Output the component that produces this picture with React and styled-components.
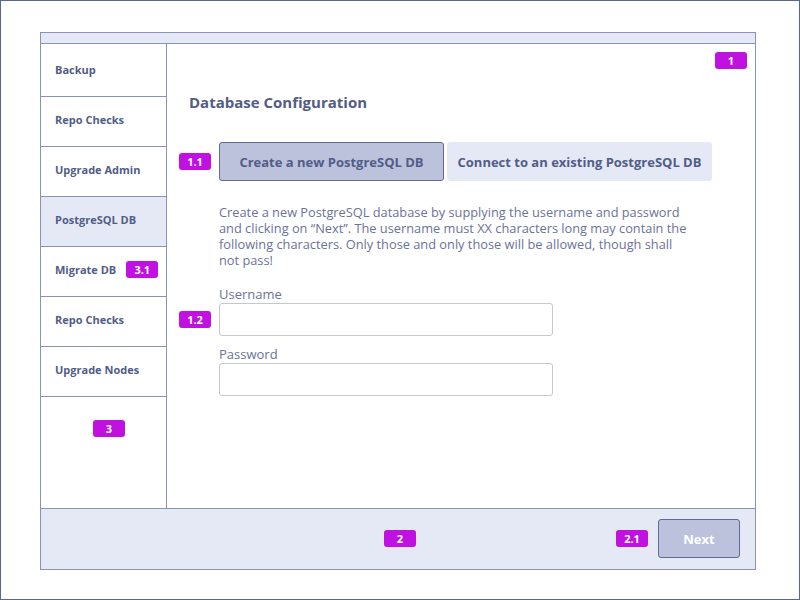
import React from "react";
import styled, { createGlobalStyle } from "styled-components";

const GlobalStyle = createGlobalStyle`
  * { box-sizing: border-box; }
  body {
    margin: 0;
    font-family: "Open Sans", "Noto Sans", sans-serif;
    background: #ffffff;
  }
`;

const navItems = [
  { label: "Backup" },
  { label: "Repo Checks" },
  { label: "Upgrade Admin" },
  { label: "PostgreSQL DB", active: true },
  { label: "Migrate DB", badge: "3.1" },
  { label: "Repo Checks" },
  { label: "Upgrade Nodes" },
];

export default function App() {
  return (
    <>
      <GlobalStyle />
      <Page>
        <Window>
          <TopBar />
          <Body>
            <Sidebar>
              {navItems.map((item, i) => (
                <NavItem key={i} $active={item.active}>
                  {item.label}
                  {item.badge && <Badge>{item.badge}</Badge>}
                </NavItem>
              ))}
              <SidebarBadge>
                <Badge>3</Badge>
              </SidebarBadge>
            </Sidebar>

            <Main>
              <CornerBadge>1</CornerBadge>
              <Heading>Database Configuration</Heading>
              <ContentGrid>
                <Badge>1.1</Badge>
                <Tabs>
                  <Tab $active $width={225}>Create a new PostgreSQL DB</Tab>
                  <Tab $width={265}>Connect to an existing PostgreSQL DB</Tab>
                </Tabs>

                <span />
                <Description>
                  Create a new PostgreSQL database by supplying the username and password
                  and clicking on “Next”. The username must XX characters long may contain
                  the following characters. Only those and only those will be allowed,
                  though shall not pass!
                </Description>

                <span />
                <Label>Username</Label>
                <Badge>1.2</Badge>
                <Input type="text" />

                <span />
                <Label $gap>Password</Label>
                <span />
                <Input type="password" />
              </ContentGrid>
            </Main>
          </Body>

          <Footer>
            <span />
            <Badge>2</Badge>
            <FooterActions>
              <Badge>2.1</Badge>
              <NextButton>Next</NextButton>
            </FooterActions>
          </Footer>
        </Window>
      </Page>
    </>
  );
}

const Page = styled.div`
  width: 800px;
  height: 600px;
  border: 1px solid #5b6690;
  padding: 31px 43px 29px 39px;
`;

const Window = styled.div`
  height: 100%;
  border: 1px solid #8a92b6;
  display: flex;
  flex-direction: column;
`;

const TopBar = styled.div`
  height: 11px;
  flex: none;
  background: #e5e9f5;
  border-bottom: 1px solid #8a92b6;
`;

const Body = styled.div`
  flex: 1;
  display: flex;
  min-height: 0;
`;

const Sidebar = styled.nav`
  width: 126px;
  flex: none;
  border-right: 1px solid #8a92b6;
  padding-top: 3px;
  display: flex;
  flex-direction: column;
`;

const NavItem = styled.div`
  height: 50px;
  display: flex;
  align-items: center;
  gap: 10px;
  padding: 0 0 4px 14px;
  border-bottom: 1px solid #8a92b6;
  background: ${(p) => (p.$active ? "#e5e9f5" : "transparent")};
  color: #525d87;
  font-size: 11px;
  font-weight: 700;
`;

const SidebarBadge = styled.div`
  display: flex;
  padding: 23px 0 0 52px;
`;

const Badge = styled.span`
  display: inline-flex;
  align-items: center;
  justify-content: center;
  width: 32px;
  height: 17px;
  border-radius: 3px;
  background: #c111e0;
  color: #ffffff;
  font-size: 11px;
  font-weight: 700;
  line-height: 1;
  align-self: center;
  justify-self: center;
`;

const CornerBadge = styled(Badge)`
  position: absolute;
  top: 8px;
  right: 8px;
`;

const Main = styled.main`
  position: relative;
  flex: 1;
  padding: 48px 0 0 12px;
`;

const Heading = styled.h1`
  margin: 0 0 30px 10px;
  font-size: 15px;
  line-height: 20px;
  font-weight: 700;
  color: #525d87;
`;

const ContentGrid = styled.div`
  display: grid;
  grid-template-columns: 32px auto;
  column-gap: 8px;
  justify-content: start;
  align-items: center;
`;

const Tabs = styled.div`
  display: flex;
  gap: 3px;
`;

const Tab = styled.button`
  width: ${(p) => p.$width}px;
  height: 39px;
  border-radius: 3px;
  border: 1px solid ${(p) => (p.$active ? "#5f6a95" : "#e5e9f5")};
  background: ${(p) => (p.$active ? "#bcc2db" : "#e5e9f5")};
  color: #525d87;
  font-family: inherit;
  font-size: 13px;
  font-weight: 700;
  padding: 0;
`;

const Description = styled.p`
  margin: 23px 0 18px;
  width: 476px;
  font-size: 12.8px;
  line-height: 16px;
  color: #6b7399;
`;

const Label = styled.label`
  margin-top: ${(p) => (p.$gap ? "10px" : "0")};
  margin-bottom: 1px;
  font-size: 13px;
  line-height: 16px;
  color: #6b7399;
`;

const Input = styled.input`
  width: 334px;
  height: 33px;
  border: 1px solid #c8c8c8;
  border-radius: 3px;
  background: #ffffff;
  padding: 0 8px;
  font-family: inherit;
  font-size: 13px;
`;

const Footer = styled.footer`
  height: 61px;
  flex: none;
  background: #e5e9f5;
  border-top: 1px solid #8a92b6;
  display: grid;
  grid-template-columns: 1fr auto 1fr;
  align-items: center;
  padding: 0 15px 1px 19px;
`;

const FooterActions = styled.div`
  display: flex;
  align-items: center;
  justify-content: flex-end;
  gap: 10px;
`;

const NextButton = styled.button`
  width: 82px;
  height: 39px;
  border: 1px solid #5f6a95;
  border-radius: 3px;
  background: #bcc2db;
  color: #ffffff;
  font-family: inherit;
  font-size: 13px;
  font-weight: 700;
`;
